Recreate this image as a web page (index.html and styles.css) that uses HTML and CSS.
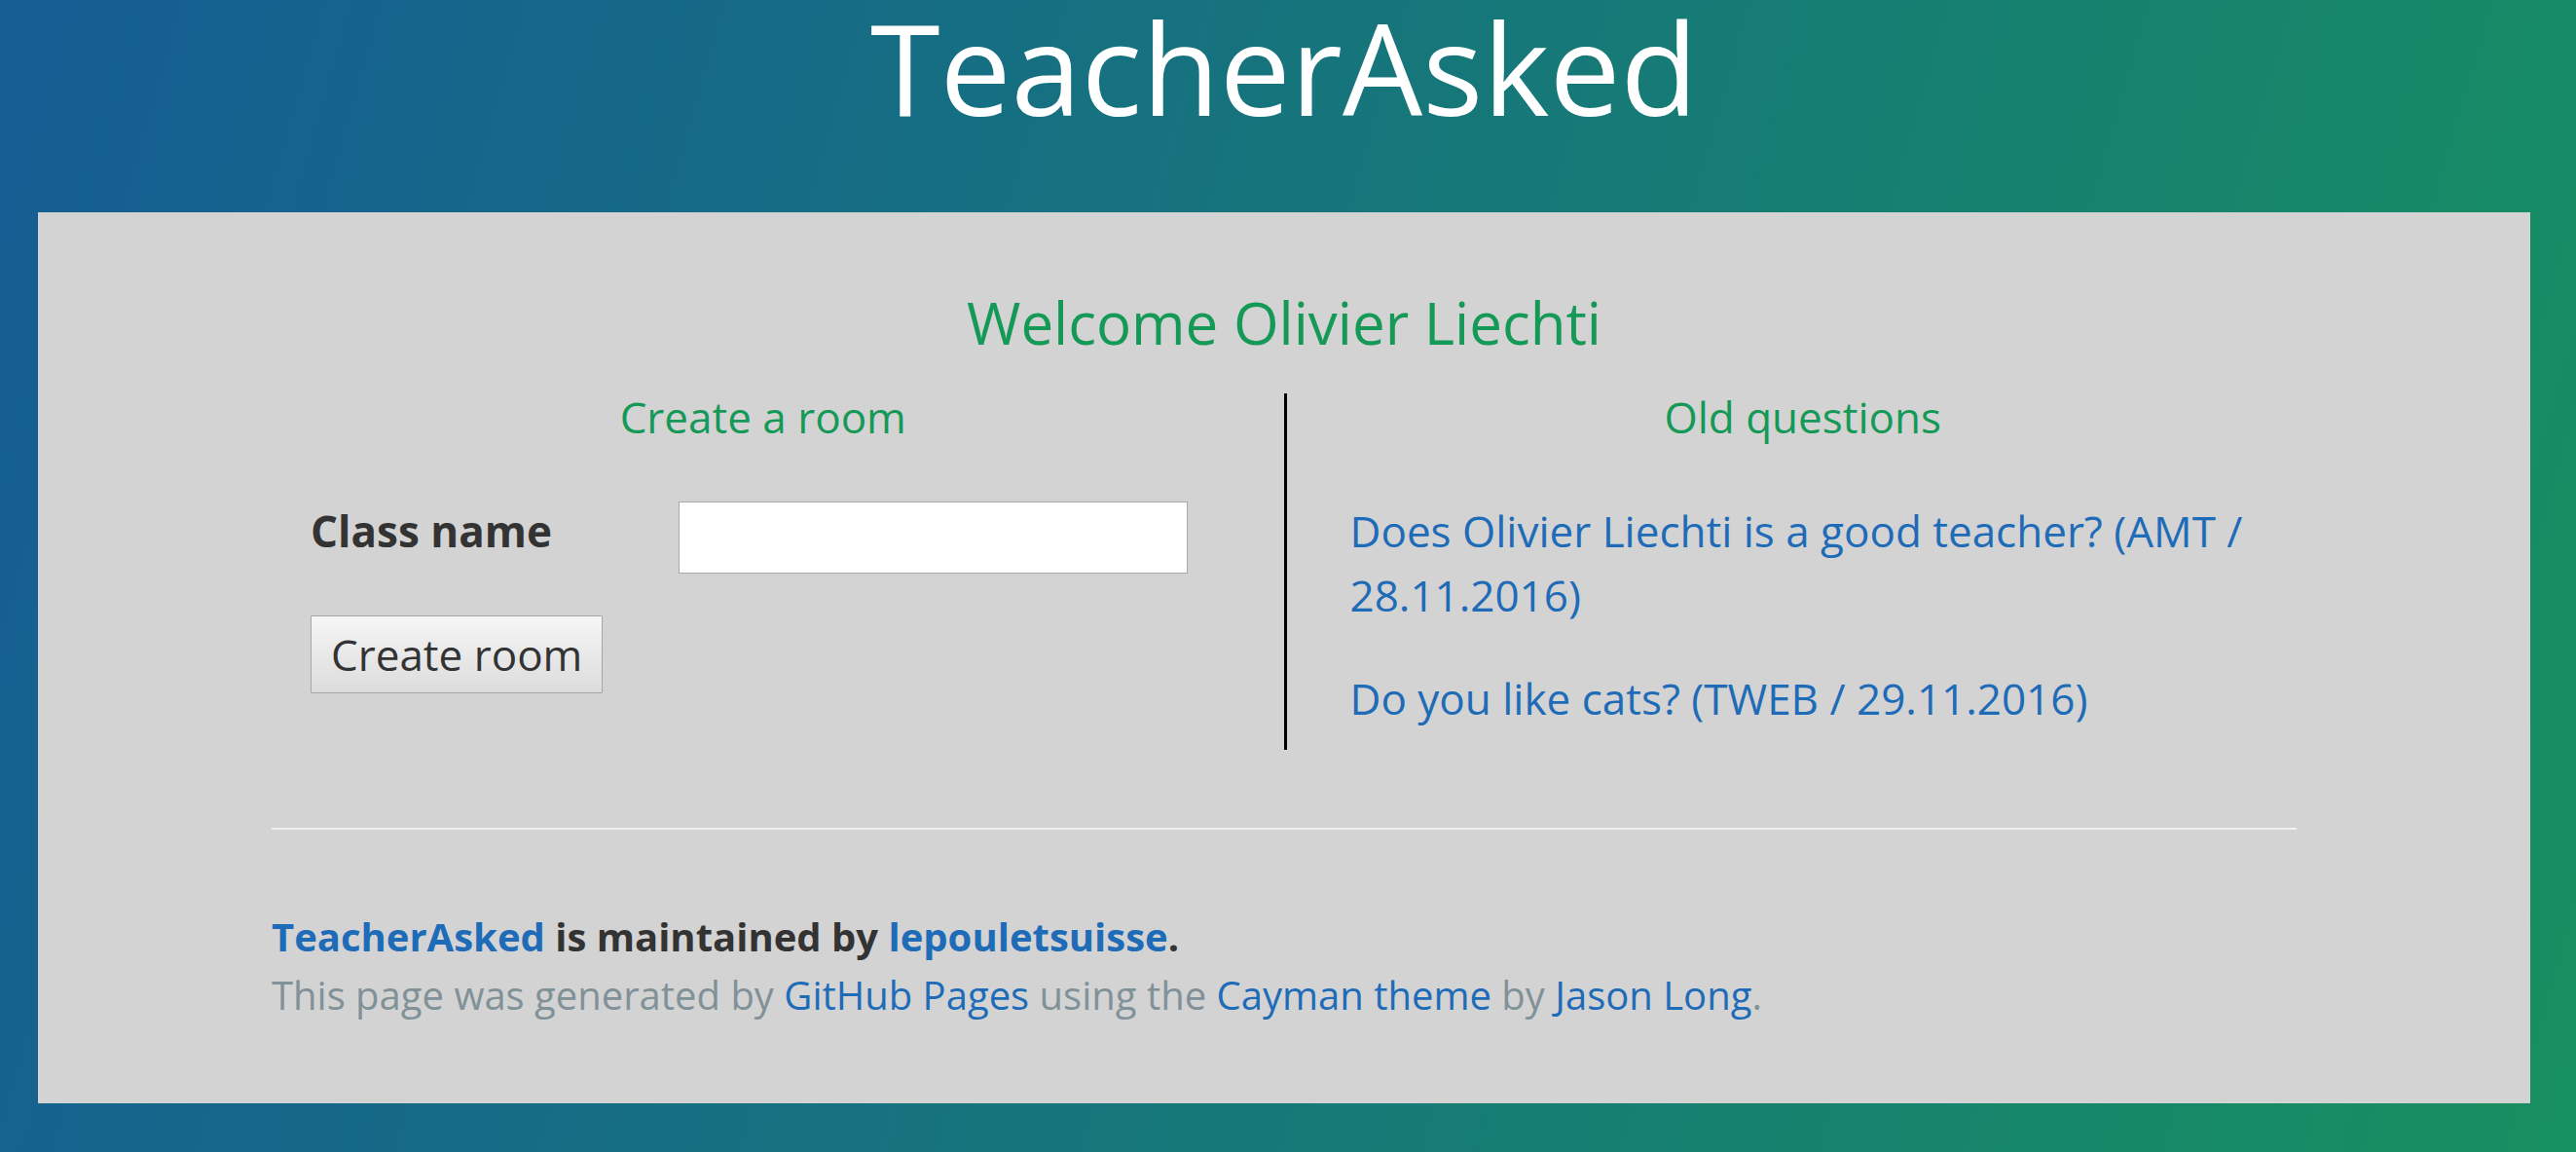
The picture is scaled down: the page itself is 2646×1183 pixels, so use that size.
FILE: index.html
```html
<!DOCTYPE html>
<html lang="en">
<head>
<meta charset="utf-8">
<title>TeacherAsked</title>
<link rel="stylesheet" href="styles.css">
</head>
<body>
<div class="page">
  <header class="page-header">
    <h1 class="project-name">TeacherAsked</h1>
  </header>
  <main class="main-content">
    <h1 class="welcome">Welcome Olivier Liechti</h1>
    <div class="row">
      <section class="col col-left">
        <h2 class="col-title">Create a room</h2>
        <form class="room-form">
          <div class="form-row">
            <label class="form-label" for="classname">Class name</label>
            <input class="form-input" id="classname" type="text">
          </div>
          <button class="btn" type="button">Create room</button>
        </form>
      </section>
      <section class="col col-right">
        <h2 class="col-title">Old questions</h2>
        <div class="questions">
          <p class="question"><a href="#">Does Olivier Liechti is a good teacher? (AMT / 28.11.2016)</a></p>
          <p class="question"><a href="#">Do you like cats? (TWEB / 29.11.2016)</a></p>
        </div>
      </section>
    </div>
    <footer class="site-footer">
      <span class="site-footer-owner"><a href="#">TeacherAsked</a> is maintained by <a href="#">lepouletsuisse</a>.</span>
      <span class="site-footer-credits">This page was generated by <a href="#">GitHub Pages</a> using the <a href="#">Cayman theme</a> by <a href="#">Jason Long</a>.</span>
    </footer>
  </main>
</div>
</body>
</html>
```

FILE: styles.css
```css
html, body {
  margin: 0;
  padding: 0;
}

body {
  min-height: 100vh;
  font-family: "Open Sans", "DejaVu Sans", sans-serif;
  background-color: #168060;
  background-image: linear-gradient(106deg, #155d94, #179060);
  color: #333;
}

.page {
  width: 2560px;
  margin-left: 39px;
}

.page-header {
  height: 218px;
  text-align: center;
}

.project-name {
  margin: 0;
  padding-top: 4px;
  font-size: 130px;
  line-height: 130px;
  font-weight: normal;
  color: #fff;
}

.main-content {
  background: #d3d3d3;
  padding: 68px 240px 81px;
}

.welcome {
  margin: 0;
  font-size: 60px;
  line-height: 90px;
  font-weight: normal;
  color: #159957;
  text-align: center;
}

.row {
  display: grid;
  grid-template-columns: 1fr 1fr;
  margin: 28px -28px 0 -29px;
}

.col {
  padding: 0 70px;
}

.col-left {
  padding-left: 69px;
}

.col-right {
  border-left: 3px solid #000;
  padding-left: 65px;
  padding-bottom: 20px;
}

.col-title {
  margin: 0;
  font-size: 44px;
  line-height: 48px;
  font-weight: normal;
  color: #159957;
  text-align: center;
}

.room-form {
  margin-top: 63px;
}

.form-row {
  display: flex;
  align-items: flex-start;
}

.form-label {
  width: 378px;
  font-size: 44px;
  line-height: 60px;
  font-weight: bold;
  color: #333;
}

.form-input {
  box-sizing: border-box;
  width: 523px;
  height: 74px;
  border: 1px solid #a9a9a9;
  background: #fff;
  font-family: inherit;
  font-size: 40px;
  padding: 0 8px;
}

.btn {
  display: block;
  margin-top: 43px;
  padding: 9px 20px;
  border: 1px solid #a6a6a6;
  border-radius: 1px;
  background: linear-gradient(#f6f6f6, #dcdcdc);
  font-family: inherit;
  font-size: 44px;
  line-height: 60px;
  color: #333;
}

.questions {
  margin-top: 60px;
}

.question {
  margin: 0 0 40px;
  font-size: 44px;
  line-height: 66px;
}

.question:last-child {
  margin-bottom: 0;
}

a {
  color: #1e6bb8;
  text-decoration: none;
}

.site-footer {
  margin-top: 80px;
  border-top: 2px solid #eff0f1;
  padding-top: 80px;
  font-size: 40px;
  line-height: 60px;
}

.site-footer-owner {
  display: block;
  font-weight: bold;
  color: #333;
}

.site-footer-credits {
  display: block;
  color: #819198;
}
```
